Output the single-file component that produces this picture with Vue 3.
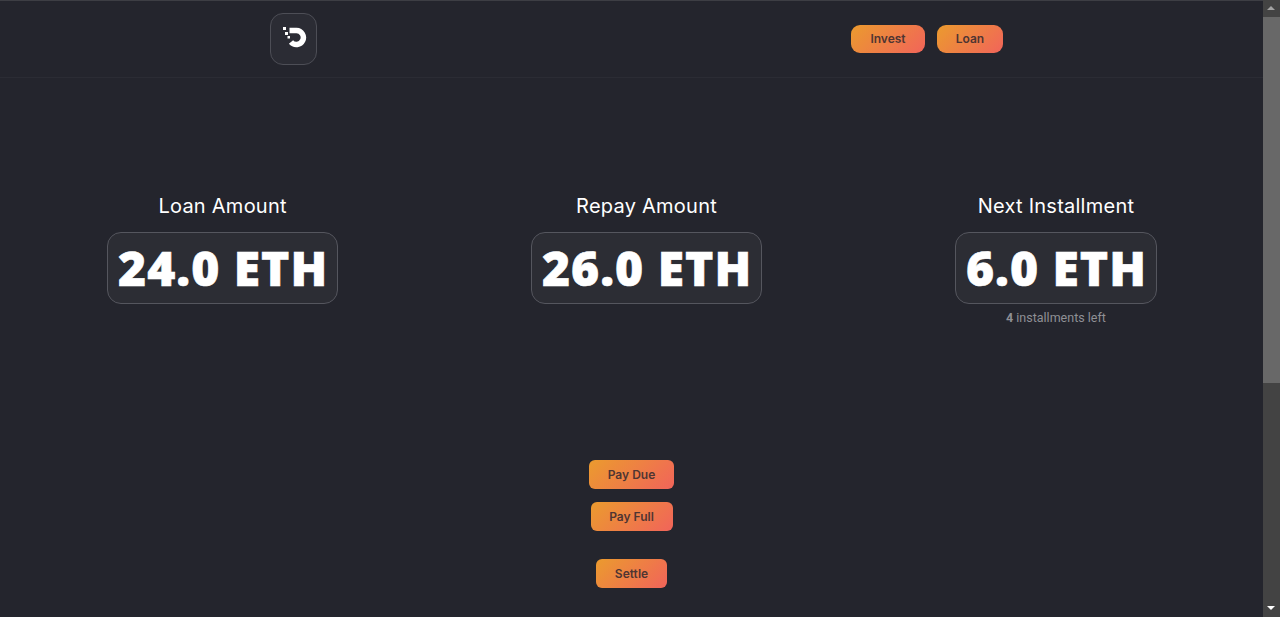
<script setup>
const stats = [
  { label: 'Loan Amount', value: '24.0 ETH' },
  { label: 'Repay Amount', value: '26.0 ETH' },
  { label: 'Next Installment', value: '6.0 ETH', left: 4 },
];
</script>

<template>
  <div class="page">
    <div class="content">
      <header class="topbar">
        <a class="logo">
          <svg width="26" height="22" viewBox="0 0 26 22">
            <path d="M8.5 4.5 H15.5 A7 7 0 1 1 10 16" fill="none" stroke="#fff" stroke-width="5.5" />
            <rect x="2" y="1" width="3" height="3" fill="#fff" />
            <rect x="4" y="6" width="3" height="3" fill="#fff" />
            <rect x="6.5" y="10" width="2.5" height="2.5" fill="#fff" />
          </svg>
        </a>
        <nav class="links">
          <button class="btn invest">Invest</button>
          <button class="btn loan">Loan</button>
        </nav>
      </header>

      <section class="stats">
        <div class="stat" v-for="s in stats" :key="s.label">
          <h2>{{ s.label }}</h2>
          <div class="card">{{ s.value }}</div>
          <p v-if="s.left" class="left"><b>{{ s.left }}</b> installments left</p>
        </div>
      </section>

      <section class="actions">
        <button class="btn due">Pay Due</button>
        <button class="btn full">Pay Full</button>
        <button class="btn settle">Settle</button>
      </section>
    </div>

    <aside class="scrollbar">
      <span class="arrow up"></span>
      <div class="thumb"></div>
      <div class="track"></div>
      <span class="arrow down"></span>
    </aside>
  </div>
</template>

<style>
body {
  margin: 0;
  background: #24252d;
}
</style>

<style scoped>
.page {
  display: flex;
  height: 617px;
  overflow: hidden;
  background: #24252d;
  font-family: "Inter", "Liberation Sans", sans-serif;
  color: #fff;
}

.content {
  flex: 1;
  min-width: 0;
  border-top: 1px solid #3d3e44;
}

.topbar {
  display: flex;
  align-items: center;
  height: 76px;
  padding-left: 270px;
  border-bottom: 1px solid #2b2c34;
}

.logo {
  display: flex;
  align-items: center;
  justify-content: center;
  width: 47px;
  height: 52px;
  box-sizing: border-box;
  padding-bottom: 5px;
  border: 1px solid #4d4e56;
  border-radius: 13px;
  background: #2b2c34;
}

.links {
  display: flex;
  gap: 12px;
  margin-left: 534px;
}

.btn {
  display: block;
  box-sizing: border-box;
  height: 28px;
  padding: 0 0 1px;
  border: none;
  border-radius: 6px;
  background: linear-gradient(135deg, #eb9b2e, #f1645a);
  color: #4f3532;
  font-family: "Inter", "Liberation Sans", sans-serif;
  font-size: 12px;
  font-weight: 600;
}

.invest { width: 74px; border-radius: 9px; }
.loan { width: 66px; border-radius: 9px; }
.due, .full, .settle { height: 29px; padding: 0; }
.due { width: 85px; }
.full { width: 82px; margin-top: 13px; }
.settle { width: 71px; margin-top: 28px; }

.stats {
  display: flex;
  justify-content: space-between;
  padding: 115px 106px 0 107px;
}

.stat {
  display: flex;
  flex-direction: column;
  align-items: center;
}

.stat h2 {
  margin: 0 0 12px;
  font-size: 20px;
  line-height: 27px;
  font-weight: 400;
  letter-spacing: 0.25px;
}

.card {
  box-sizing: border-box;
  height: 72px;
  padding: 0 9px 0 10px;
  border: 1px solid #55565e;
  border-radius: 14px;
  background: #2c2d34;
  font-family: "Open Sans", sans-serif;
  font-size: 48px;
  font-weight: 800;
  letter-spacing: 1px;
  -webkit-text-stroke: 0.6px #fff;
  line-height: 70px;
  white-space: nowrap;
}

.left {
  margin: 5px 0 0;
  font-family: "Roboto", sans-serif;
  font-size: 12.5px;
  line-height: 18px;
  color: #8f9095;
}

.actions {
  display: flex;
  flex-direction: column;
  align-items: center;
  padding-top: 133px;
}

.scrollbar {
  display: flex;
  flex-direction: column;
  flex: none;
  width: 17px;
  background: #434343;
}

.arrow {
  flex: none;
  height: 17px;
  position: relative;
}

.arrow::after {
  content: "";
  position: absolute;
  left: 4px;
  border-left: 4px solid transparent;
  border-right: 4px solid transparent;
}

.arrow.up::after {
  top: 6px;
  border-bottom: 4px solid #a3a3a3;
}

.arrow.down::after {
  top: 6px;
  border-top: 4px solid #fff;
}

.thumb {
  flex: none;
  height: 366px;
  background: #686868;
}

.track {
  flex: 1;
}
</style>
